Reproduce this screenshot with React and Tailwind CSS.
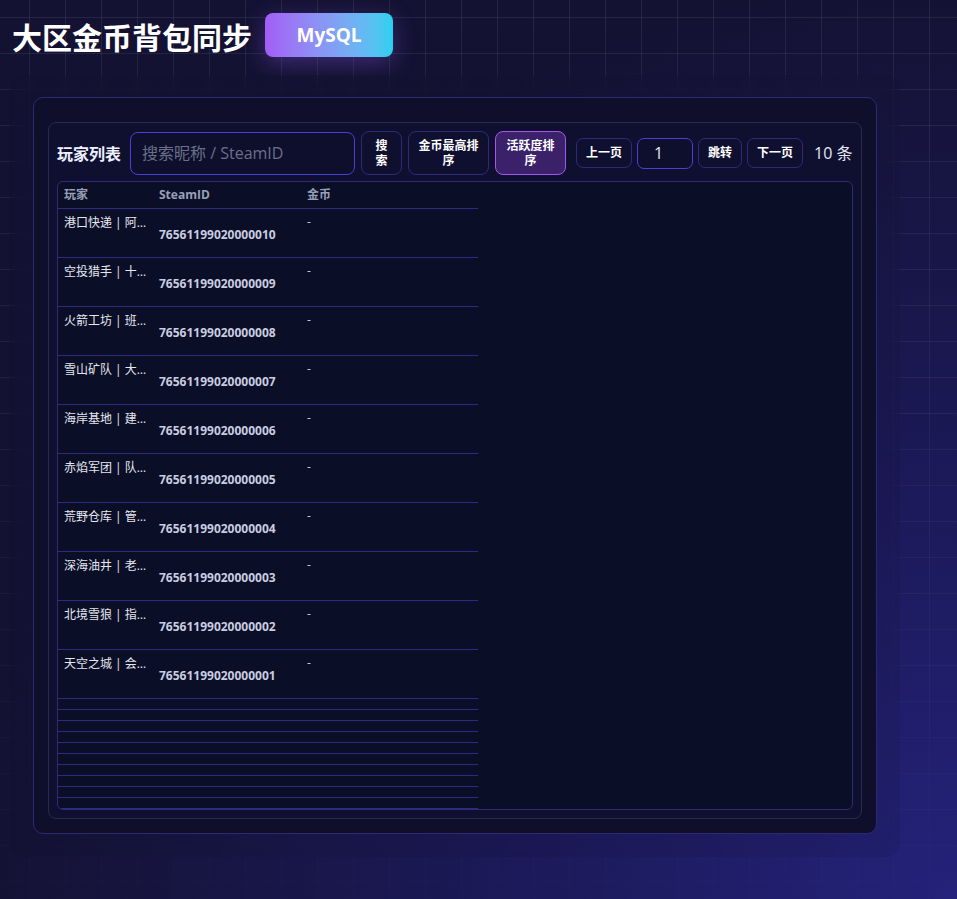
import React from 'react';

const players = [
  { name: '港口快递 | 阿杰', steamId: '76561199020000010' },
  { name: '空投猎手 | 十一', steamId: '76561199020000009' },
  { name: '火箭工坊 | 班长', steamId: '76561199020000008' },
  { name: '雪山矿队 | 大熊', steamId: '76561199020000007' },
  { name: '海岸基地 | 建筑师', steamId: '76561199020000006' },
  { name: '赤焰军团 | 队长', steamId: '76561199020000005' },
  { name: '荒野仓库 | 管家', steamId: '76561199020000004' },
  { name: '深海油井 | 老王', steamId: '76561199020000003' },
  { name: '北境雪狼 | 指挥', steamId: '76561199020000002' },
  { name: '天空之城 | 会长', steamId: '76561199020000001' },
];

const font = { fontFamily: '"Open Sans", "Noto Sans CJK SC", sans-serif' };

const App = () => {
  return (
    <div
      style={font}
      className="relative min-h-screen w-full overflow-hidden text-white bg-[#141233] [background-image:radial-gradient(ellipse_at_100%_100%,#24227a_0%,#1b1956_35%,#141233_72%)]"
    >
      {/* grid backdrop */}
      <div className="pointer-events-none absolute inset-0 [background-image:linear-gradient(rgba(255,255,255,0.08)_1px,transparent_1px),linear-gradient(90deg,rgba(255,255,255,0.08)_1px,transparent_1px)] [background-size:36px_36px] [background-position:29px_17px] [mask-image:linear-gradient(to_bottom,black_0%,rgba(0,0,0,0.7)_40%,rgba(0,0,0,0.15)_100%)]" />

      <div className="relative">
        {/* Header */}
        <div className="flex items-center gap-[13px] pl-[12px] pt-[13px]">
          <h1 className="text-[30px] font-bold leading-none pt-[5px]">大区金币背包同步</h1>
          <div className="w-[128px] h-[44px] rounded-[8px] bg-gradient-to-r from-[#a35cf6] to-[#27d1f0] flex items-center justify-center text-[19px] font-bold shadow-[0_6px_22px_rgba(139,92,246,0.35)]">
            MySQL
          </div>
        </div>

        {/* Section */}
        <div className="ml-[10px] mt-[18px] w-[890px] rounded-[16px] bg-[rgba(16,15,42,0.12)] backdrop-blur-md pt-[22px] pb-[23px] px-[23px]">
          <div className="rounded-[10px] border border-[#2d2a75] bg-[#100f2b] pt-[24px] px-[14px] pb-[14px]">
            <div className="rounded-[8px] border border-[#282b4d] bg-[#0f1030] p-[8px]">
              {/* Toolbar */}
              <div className="flex items-center h-[44px]">
                <span className="text-[16px] font-bold text-[#eef0ff] mr-[9px] pt-[2px]">玩家列表</span>
                <div className="w-[225px] h-[43px] rounded-[8px] border border-[#4a3fd6] bg-[#0e0f2c] flex items-center px-[11px] text-[16px] text-[#6b7088]">
                  搜索昵称 / SteamID
                </div>
                <button className="ml-[6px] w-[41px] h-[44px] rounded-[8px] border border-[#2e2a78] bg-[#0f1030] text-[12px] font-bold leading-[15px] text-white px-[12px]">
                  搜索
                </button>
                <button className="ml-[6px] w-[81px] h-[44px] rounded-[8px] border border-[#2e2a78] bg-[#0f1030] text-[12px] font-bold leading-[15px] text-white px-[6px]">
                  金币最高排序
                </button>
                <button className="ml-[6px] w-[71px] h-[44px] rounded-[8px] border border-[#a555f0] bg-[#3b2169] text-[12px] font-bold leading-[15px] text-white px-[6px]">
                  活跃度排序
                </button>
                <button className="ml-[10px] w-[56px] h-[30px] rounded-[7px] border border-[#2e2a78] bg-[#0f1030] text-[12px] font-bold text-white">
                  上一页
                </button>
                <div className="ml-[5px] w-[56px] h-[31px] rounded-[7px] border border-[#4a3fd6] bg-[#0e0f2c] flex items-center pl-[16px] text-[16px] text-[#e5e7f0]">
                  1
                </div>
                <button className="ml-[5px] w-[44px] h-[30px] rounded-[7px] border border-[#2e2a78] bg-[#0f1030] text-[12px] font-bold text-white">
                  跳转
                </button>
                <button className="ml-[5px] w-[56px] h-[30px] rounded-[7px] border border-[#2e2a78] bg-[#0f1030] text-[12px] font-bold text-white">
                  下一页
                </button>
                <span className="ml-[11px] text-[16px] text-[#e5e7f0]">10 条</span>
              </div>

              {/* Table */}
              <div className="mt-[6px] rounded-[6px] border border-[#2f2a7a] bg-[#0b0e27] overflow-hidden">
                <div className="w-[420px]">
                  <div className="flex h-[27px] items-center border-b border-[#2f2a84] text-[12px] font-bold text-[#98a0b8]">
                    <div className="w-[94px] pl-[6px]">玩家</div>
                    <div className="w-[148px] pl-[7px]">SteamID</div>
                    <div className="flex-1 pl-[7px]">金币</div>
                  </div>
                  {players.map((p) => (
                    <div key={p.steamId} className="flex h-[49px] border-b border-[#2f2a84]">
                      <div className="w-[94px] pl-[6px] pr-[4px] pt-[6px] text-[12px] leading-[16px] text-[#e5e7f0] truncate">
                        {p.name}
                      </div>
                      <div className="w-[148px] pl-[7px] pt-[18px] text-[12px] leading-[16px] font-bold text-[#c9cde0]">
                        {p.steamId}
                      </div>
                      <div className="flex-1 pl-[7px] pt-[5px] text-[12px] leading-[16px] text-[#c9cde0]">-</div>
                    </div>
                  ))}
                  {Array.from({ length: 10 }).map((_, i) => (
                    <div key={i} className="h-[11px] border-b border-[#2f2a84]" />
                  ))}
                </div>
              </div>
            </div>
          </div>
        </div>
      </div>
    </div>
  );
};

export default App;
